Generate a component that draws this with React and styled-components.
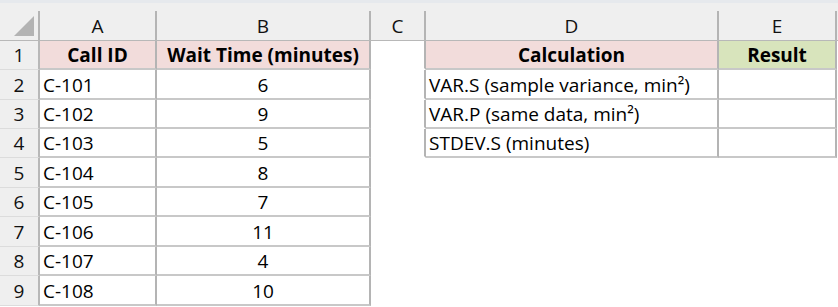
import React from 'react';
import styled, { createGlobalStyle } from 'styled-components';

const GlobalStyle = createGlobalStyle`
  * { box-sizing: border-box; }
  body {
    margin: 0;
    background: #fff;
    font-family: "Open Sans", "Liberation Sans", sans-serif;
    color: #000;
  }
`;

const W = { head: 40, a: 117, b: 214, c: 55, d: 293, e: 118 };
const ROW_H = [29, 30, 29, 29, 30, 29, 30, 29, 30];

const Sheet = styled.div`
  width: 838px;
  height: 307px;
  overflow: hidden;
  background: #fff;
`;

const TopBand = styled.div`
  height: 3px;
  background: #e6e9ed;
`;

const HeaderBar = styled.div`
  display: flex;
  height: 38px;
  background: #efefef;
  border-bottom: 1px solid #b8b8b8;
`;

const Corner = styled.div`
  width: ${W.head}px;
  margin-top: 8px;
  border-right: 2px solid #b4b4b4;
  display: flex;
  align-items: flex-end;
  justify-content: flex-end;
  padding: 0 4px 4px 0;
`;

const ColHead = styled.div`
  width: ${(p) => p.$w}px;
  margin-top: 8px;
  border-right: 2px solid #b4b4b4;
  display: flex;
  align-items: center;
  justify-content: center;
  font-size: 19px;
  color: #111;
`;

const Row = styled.div`
  display: flex;
  height: ${(p) => p.$h}px;
`;

const RowHead = styled.div`
  width: ${W.head}px;
  background: #efefef;
  border-right: 2px solid #b8b8b8;
  border-bottom: 1px solid #dcdcdc;
  display: flex;
  align-items: center;
  justify-content: center;
  font-size: 19px;
  color: #111;
`;

const Cell = styled.div`
  width: ${(p) => p.$w}px;
  background: ${(p) => p.$bg || '#fff'};
  border-right: 2px solid ${(p) => (p.$right ? '#b4b4b4' : 'transparent')};
  border-bottom: 2px solid ${(p) => (p.$bottom ? '#c8c8c8' : 'transparent')};
  display: flex;
  align-items: center;
  justify-content: ${(p) => (p.$center ? 'center' : 'flex-start')};
  padding: 1px 3px 0 3px;
  font-size: 19px;
  font-weight: ${(p) => (p.$bold ? 700 : 400)};
  white-space: nowrap;
`;

const PINK = '#f2dcdb';
const GREEN = '#d8e4bc';

const calls = [
  ['C-101', 6],
  ['C-102', 9],
  ['C-103', 5],
  ['C-104', 8],
  ['C-105', 7],
  ['C-106', 11],
  ['C-107', 4],
  ['C-108', 10],
];

const calcs = [
  'VAR.S (sample variance, min²)',
  'VAR.P (same data, min²)',
  'STDEV.S (minutes)',
];

export default function App() {
  return (
    <Sheet>
      <GlobalStyle />
      <TopBand />
      <HeaderBar>
        <Corner>
          <svg width="20" height="20" viewBox="0 0 20 20">
            <polygon points="20,0 20,20 0,20" fill="#b3b3b3" />
          </svg>
        </Corner>
        <ColHead $w={W.a}>A</ColHead>
        <ColHead $w={W.b}>B</ColHead>
        <ColHead $w={W.c}>C</ColHead>
        <ColHead $w={W.d}>D</ColHead>
        <ColHead $w={W.e}>E</ColHead>
      </HeaderBar>
      {ROW_H.map((h, i) => {
        const inCalc = i <= calcs.length;
        const call = i > 0 ? calls[i - 1] : null;
        return (
          <Row key={i} $h={h}>
            <RowHead>{i + 1}</RowHead>
            <Cell $w={W.a} $right $bottom $bold={i === 0} $center={i === 0} $bg={i === 0 ? PINK : null}>
              {i === 0 ? 'Call ID' : call[0]}
            </Cell>
            <Cell $w={W.b} $right $bottom $center $bold={i === 0} $bg={i === 0 ? PINK : null}>
              {i === 0 ? 'Wait Time (minutes)' : call[1]}
            </Cell>
            <Cell $w={W.c} $right={inCalc} />
            <Cell $w={W.d} $right={inCalc} $bottom={inCalc} $bold={i === 0} $center={i === 0} $bg={i === 0 ? PINK : null}>
              {i === 0 ? 'Calculation' : inCalc ? calcs[i - 1] : ''}
            </Cell>
            <Cell $w={W.e} $right={inCalc} $bottom={inCalc} $bold={i === 0} $center $bg={i === 0 ? GREEN : null}>
              {i === 0 ? 'Result' : ''}
            </Cell>
          </Row>
        );
      })}
    </Sheet>
  );
}
